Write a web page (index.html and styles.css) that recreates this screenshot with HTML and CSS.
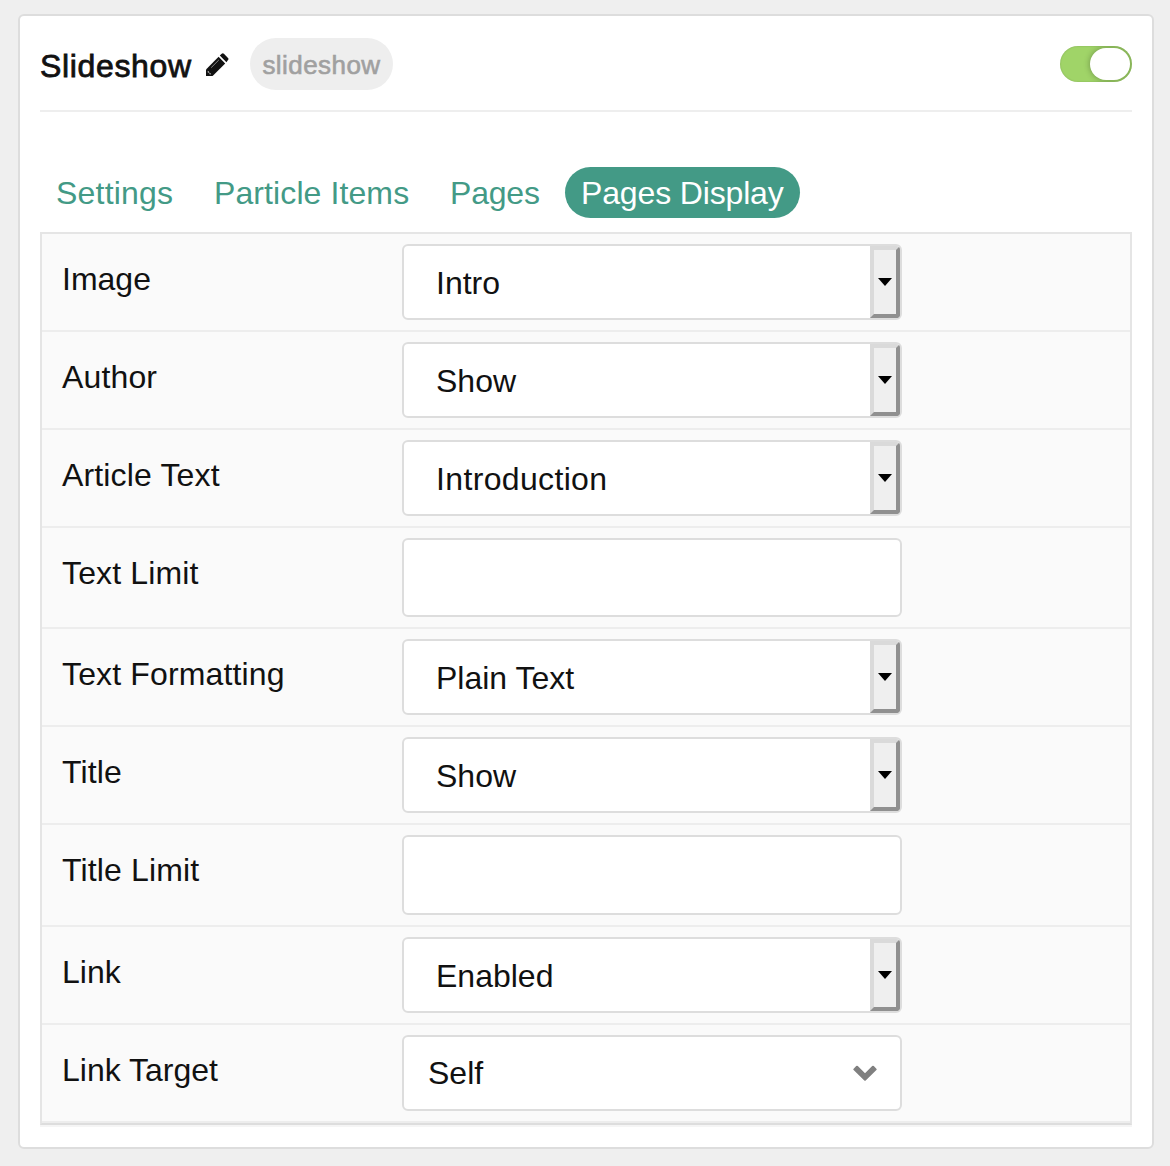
FILE: index.html

```html
<!DOCTYPE html>
<html lang="en">
<head>
<meta charset="utf-8">
<title>Slideshow</title>
<link rel="stylesheet" href="styles.css">
</head>
<body>
<main class="card">
  <header class="card-header">
    <h1 class="title">Slideshow</h1>
    <svg class="pencil" viewBox="0 0 24 24" width="24" height="24" aria-hidden="true">
      <path fill="#111" d="M1 16.400 13.600 3.800 20.200 10.400 7.600 23H1z"/>
      <path fill="#111" d="M14.800 2.600 16.700.8Q17.800-.2 18.900.8L23 4.900Q24 6 23 7.100L21.400 9.200z"/>
      <path fill="#fff" d="M2.800 17.800 6.200 21.200H4.600V19.400H2.800z"/>
      <path fill="none" stroke="#999" stroke-width="0.9" d="M6.200 14.600 13.800 7"/>
    </svg>
    <span class="badge">slideshow</span>
    <span class="switch"><span class="knob"></span></span>
  </header>
  <nav class="tabs">
    <a class="tab tab-settings">Settings</a>
    <a class="tab tab-items">Particle Items</a>
    <a class="tab tab-pages">Pages</a>
    <a class="tab active">Pages Display</a>
  </nav>
  <section class="fields">
    <div class="row"><label class="label">Image</label><div class="control select"><span class="value">Intro</span><span class="button"><i class="caret"></i></span></div></div>
    <div class="row"><label class="label wide">Author</label><div class="control select"><span class="value">Show</span><span class="button"><i class="caret"></i></span></div></div>
    <div class="row"><label class="label wide">Article Text</label><div class="control select"><span class="value wide">Introduction</span><span class="button"><i class="caret"></i></span></div></div>
    <div class="row"><label class="label wide">Text Limit</label><div class="control input"></div></div>
    <div class="row"><label class="label wide">Text Formatting</label><div class="control select"><span class="value">Plain Text</span><span class="button"><i class="caret"></i></span></div></div>
    <div class="row"><label class="label wide">Title</label><div class="control select"><span class="value">Show</span><span class="button"><i class="caret"></i></span></div></div>
    <div class="row"><label class="label wide">Title Limit</label><div class="control input tall"></div></div>
    <div class="row"><label class="label">Link</label><div class="control select"><span class="value">Enabled</span><span class="button"><i class="caret"></i></span></div></div>
    <div class="row"><label class="label">Link Target</label><div class="control picker"><span class="value">Self</span>
      <svg class="chevron" viewBox="0 0 24 16" width="24" height="16" aria-hidden="true"><path fill="#808080" d="M.4 4 3.200 1Q4 .4 4.800 1L12 8.200 19.200 1Q20 .4 20.800 1L23.600 4Q24 4.500 23.400 5.100L12.700 15.400Q12 16 11.300 15.400L.6 5.100Q0 4.500.4 4z"/></svg></div></div>
  </section>
</main>
</body>
</html>
```

FILE: styles.css

```css
* { box-sizing: border-box; }
body {
  margin: 0;
  padding: 14px 16px 17px 18px;
  height: 1166px;
  background: #efefef;
  color: #111;
  font: 32px/48px "Liberation Sans", Arial, sans-serif;
}
.card {
  height: 1135px;
  padding: 0 20px;
  background: #fff;
  border: 2px solid #ddd;
  border-radius: 6px;
}
.card-header {
  display: flex;
  align-items: center;
  height: 96px;
  border-bottom: 2px solid #eee;
}
.title {
  width: 165px;
  margin: 5px 0 0;
  font-size: 32px;
  font-weight: 400;
  letter-spacing: 0.65px;
  -webkit-text-stroke: 0.8px #111;
}
.pencil { margin-top: 3px; }
.badge {
  width: 143px;
  height: 52px;
  margin: 2px 0 0 21px;
  border-radius: 26px;
  background: #eee;
  color: #a0a0a0;
  font-size: 26px;
  line-height: 54px;
  letter-spacing: 0.45px;
  text-align: center;
  -webkit-text-stroke: 0.6px #a0a0a0;
}
.switch {
  display: flex;
  justify-content: flex-end;
  width: 72px;
  height: 36px;
  margin: 2px 0 0 auto;
  padding: 2px;
  border-radius: 18px;
  background: #a0d468;
  overflow: hidden;
  box-shadow: inset 0 0 2px rgba(0, 0, 0, 0.2);
}
.knob {
  width: 40px;
  height: 32px;
  border-radius: 16px;
  background: #fff;
  box-shadow: 0 0 6px rgba(0, 0, 0, 0.32);
}
.tabs {
  display: flex;
  height: 120px;
  padding-top: 55px;
}
.tab {
  height: 51px;
  margin-right: 9px;
  padding: 0 16px;
  border-radius: 26px;
  color: #439a86;
  line-height: 52px;
  white-space: nowrap;
}
.tab-settings { width: 149px; letter-spacing: 0.2px; }
.tab-items { width: 227px; letter-spacing: 0.1px; }
.tab-pages { width: 122px; letter-spacing: -0.2px; }
.active { width: 235px; background: #439a86; color: #fff; letter-spacing: -0.15px; }
.fields {
  border: 2px solid #e5e5e5;
  border-bottom-color: #ddd;
  background: #fafafa;
  box-shadow: 0 2px #f5f5f5;
}
.row {
  display: flex;
  padding: 10px 20px;
  border-bottom: 2px solid #ededed;
}
.label { width: 340px; padding-top: 11px; }
.label.wide { letter-spacing: 0.15px; }
.value.wide { letter-spacing: 0.35px; }
.control {
  display: flex;
  width: 500px;
  height: 76px;
  border: 2px solid #ddd;
  border-radius: 6px;
  background: #fff;
  overflow: hidden;
}
.select { justify-content: space-between; padding-left: 32px; }
.select .value { padding-top: 13px; }
.input { height: 79px; }
.tall { height: 80px; }
.button {
  display: flex;
  align-items: center;
  justify-content: center;
  width: 30px;
  padding-bottom: 1px;
  border: 4px solid;
  border-color: #dadada #909090 #909090 #dadada;
  background: #efefef;
}
.caret {
  border: 7px solid transparent;
  border-top: 8px solid #000;
  border-bottom: 0;
}
.picker {
  align-items: center;
  justify-content: space-between;
  padding: 0 23px 0 24px;
}
```
